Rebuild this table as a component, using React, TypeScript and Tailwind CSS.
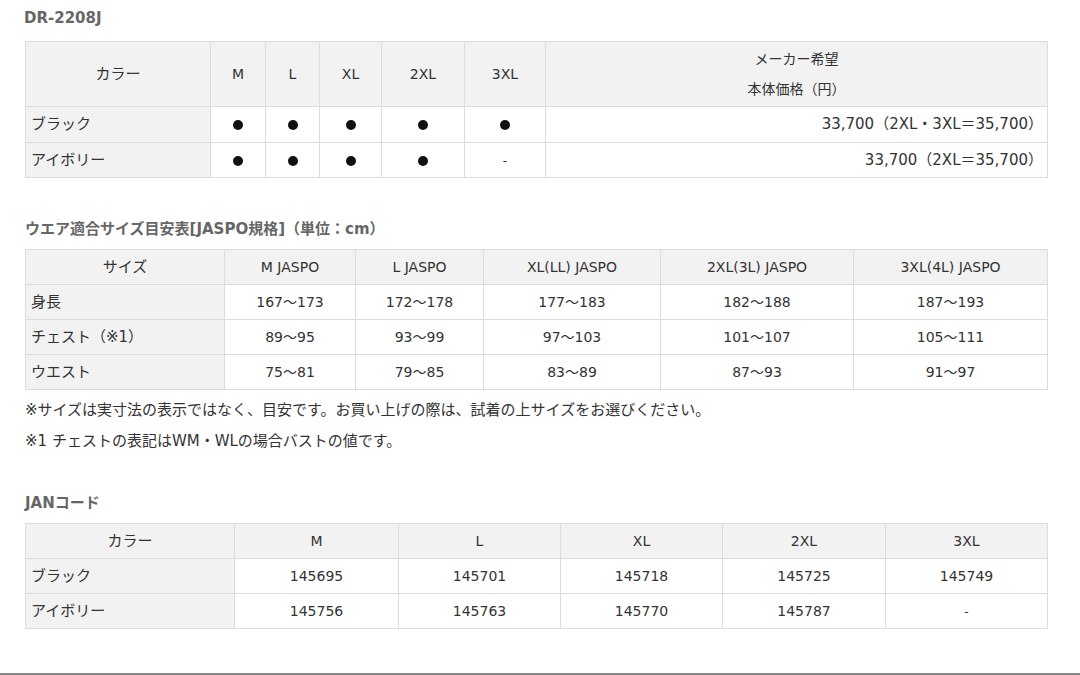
const font = { fontFamily: '"DejaVu Sans", "Noto Sans CJK JP", sans-serif' };

const th = 'border border-[#dcdcdc] bg-[#f2f2f2] font-normal text-center align-middle p-0';
const label = 'border border-[#dcdcdc] bg-[#f2f2f2] text-left align-middle pl-[5px] text-[15px]';
const td = 'border border-[#dcdcdc] bg-white text-center align-middle p-0 text-[14px]';

function Dot() {
  return <span className="inline-block w-[10px] h-[10px] rounded-full bg-[#111] align-middle" />;
}

function Dash() {
  return <span className="text-[12px]">-</span>;
}

const sizeChart = [
  { name: '身長', values: ['167～173', '172～178', '177～183', '182～188', '187～193'] },
  { name: 'チェスト（※1）', values: ['89～95', '93～99', '97～103', '101～107', '105～111'] },
  { name: 'ウエスト', values: ['75～81', '79～85', '83～89', '87～93', '91～97'] },
];

const janCodes = [
  { name: 'ブラック', values: ['145695', '145701', '145718', '145725', '145749'] },
  { name: 'アイボリー', values: ['145756', '145763', '145770', '145787', '-'] },
];

export default function App() {
  return (
    <div className="w-[1080px] h-[675px] bg-white text-[#333] flex flex-col" style={font}>
      <div className="px-[25px] pt-[8px]">
        {/* 価格表 */}
        <h2 className="text-[15px] font-bold text-[#666] leading-[20px] mb-[13px] -ml-[1px]">DR-2208J</h2>
        <table className="w-[1022px] table-fixed border-collapse">
          <colgroup>
            <col className="w-[185px]" />
            <col className="w-[55px]" />
            <col className="w-[54px]" />
            <col className="w-[62px]" />
            <col className="w-[83px]" />
            <col className="w-[81px]" />
            <col className="w-[502px]" />
          </colgroup>
          <thead>
            <tr className="h-[65px]">
              <th className={`${th} text-[15px]`}>カラー</th>
              <th className={`${th} text-[14px]`}>M</th>
              <th className={`${th} text-[14px]`}>L</th>
              <th className={`${th} text-[14px]`}>XL</th>
              <th className={`${th} text-[14px]`}>2XL</th>
              <th className={`${th} text-[14px]`}>3XL</th>
              <th className={`${th} text-[14px] leading-[30px]`}>
                <div>メーカー希望</div>
                <div>本体価格（円）</div>
              </th>
            </tr>
          </thead>
          <tbody>
            <tr className="h-[36px]">
              <td className={label}>ブラック</td>
              <td className={td}><Dot /></td>
              <td className={td}><Dot /></td>
              <td className={td}><Dot /></td>
              <td className={td}><Dot /></td>
              <td className={td}><Dot /></td>
              <td className={`${td} !text-right !text-[15px] pr-[4px]`}>33,700（2XL・3XL＝35,700）</td>
            </tr>
            <tr className="h-[35px]">
              <td className={label}>アイボリー</td>
              <td className={td}><Dot /></td>
              <td className={td}><Dot /></td>
              <td className={td}><Dot /></td>
              <td className={td}><Dot /></td>
              <td className={td}><Dash /></td>
              <td className={`${td} !text-right !text-[15px] pr-[4px]`}>33,700（2XL＝35,700）</td>
            </tr>
          </tbody>
        </table>

        {/* サイズ表 */}
        <h2 className="text-[15px] font-bold text-[#666] leading-[20px] mt-[41px] mb-[10px]">
          ウエア適合サイズ目安表[JASPO規格]（単位：cm）
        </h2>
        <table className="w-[1022px] table-fixed border-collapse">
          <colgroup>
            <col className="w-[199px]" />
            <col className="w-[131px]" />
            <col className="w-[128px]" />
            <col className="w-[177px]" />
            <col className="w-[193px]" />
            <col className="w-[194px]" />
          </colgroup>
          <thead>
            <tr className="h-[35px]">
              <th className={`${th} text-[15px]`}>サイズ</th>
              <th className={`${th} text-[14px]`}>M JASPO</th>
              <th className={`${th} text-[14px]`}>L JASPO</th>
              <th className={`${th} text-[14px]`}>XL(LL) JASPO</th>
              <th className={`${th} text-[14px]`}>2XL(3L) JASPO</th>
              <th className={`${th} text-[14px]`}>3XL(4L) JASPO</th>
            </tr>
          </thead>
          <tbody>
            {sizeChart.map((row) => (
              <tr key={row.name} className="h-[35px]">
                <td className={label}>{row.name}</td>
                {row.values.map((v, i) => (
                  <td key={i} className={td}>{v}</td>
                ))}
              </tr>
            ))}
          </tbody>
        </table>
        <p className="text-[15px] leading-[31px] mt-[5px]">
          ※サイズは実寸法の表示ではなく、目安です。お買い上げの際は、試着の上サイズをお選びください。
        </p>
        <p className="text-[15px] leading-[31px]">※1 チェストの表記はWM・WLの場合バストの値です。</p>

        {/* JANコード */}
        <h2 className="text-[15px] font-bold text-[#666] leading-[20px] mt-[36px] mb-[10px]">JANコード</h2>
        <table className="w-[1022px] table-fixed border-collapse">
          <colgroup>
            <col className="w-[209px]" />
            <col className="w-[164px]" />
            <col className="w-[162px]" />
            <col className="w-[162px]" />
            <col className="w-[163px]" />
            <col className="w-[162px]" />
          </colgroup>
          <thead>
            <tr className="h-[35px]">
              <th className={`${th} text-[15px]`}>カラー</th>
              <th className={`${th} text-[14px]`}>M</th>
              <th className={`${th} text-[14px]`}>L</th>
              <th className={`${th} text-[14px]`}>XL</th>
              <th className={`${th} text-[14px]`}>2XL</th>
              <th className={`${th} text-[14px]`}>3XL</th>
            </tr>
          </thead>
          <tbody>
            {janCodes.map((row) => (
              <tr key={row.name} className="h-[35px]">
                <td className={label}>{row.name}</td>
                {row.values.map((v, i) => (
                  <td key={i} className={td}>{v === '-' ? <Dash /> : v}</td>
                ))}
              </tr>
            ))}
          </tbody>
        </table>
      </div>
      <div className="mt-auto h-[2px] bg-[#888]" />
    </div>
  );
}
